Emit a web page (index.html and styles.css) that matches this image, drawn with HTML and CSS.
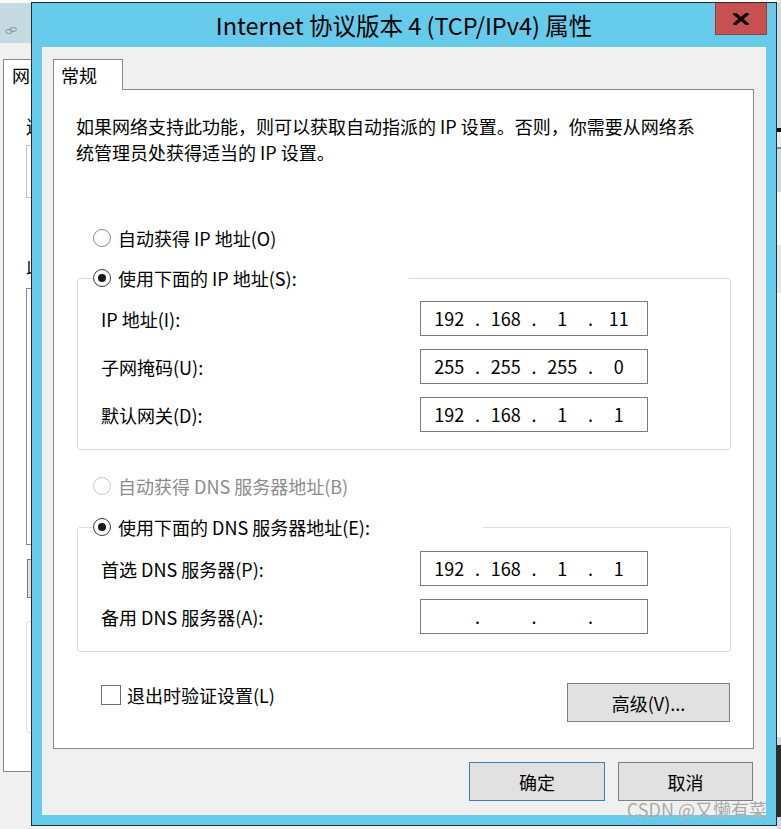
FILE: index.html
```html
<!DOCTYPE html>
<html lang="zh-CN">
<head>
  <meta charset="UTF-8" />
  <meta name="viewport" content="width=device-width, initial-scale=1.0"/>
  <title>Internet 协议版本 4 (TCP/IPv4) 属性</title>
  <link rel="stylesheet" href="styles.css">
</head>
<body>
  <div class="desktop">
    <!-- adapter properties window behind the dialog, only its left edge shows -->
    <div class="back-window">
      <div class="back-title">
        <svg class="back-icon" width="12" height="7" viewBox="0 0 12 7">
          <ellipse cx="4" cy="4.5" rx="3.5" ry="2" fill="none" stroke="#8a9298" stroke-width="1"/>
          <ellipse cx="8" cy="2.5" rx="3.5" ry="2" fill="none" stroke="#8a9298" stroke-width="1"/>
        </svg>
      </div>
      <div class="back-body">
        <div class="back-tab">网</div>
        <div class="back-panel">
          <p class="back-label">连</p>
          <div class="back-box"></div>
          <p class="back-label list-label">此</p>
          <div class="back-list"></div>
          <div class="back-btn"></div>
          <div class="back-group"></div>
        </div>
      </div>
    </div>

    <div class="right-strip"></div>

    <div class="dialog">
      <div class="titlebar">
        <span class="title">Internet 协议版本 4 (TCP/IPv4) 属性</span>
        <button class="close-btn" aria-label="关闭">
          <svg width="16" height="12" viewBox="0 0 16 12">
            <path d="M2 1 L14 11 M14 1 L2 11" stroke="#000" stroke-width="3.2" stroke-linecap="square"/>
          </svg>
        </button>
      </div>

      <div class="client">
        <div class="tab">常规</div>
        <div class="panel">
          <p class="intro">如果网络支持此功能，则可以获取自动指派的 IP 设置。否则，你需要从网络系<br>统管理员处获得适当的 IP 设置。</p>

          <label class="radio first-radio"><span class="radio-mark"></span>自动获得 IP 地址(O)</label>

          <fieldset class="group">
            <legend class="radio checked legend-ip"><span class="radio-mark"></span>使用下面的 IP 地址(S):</legend>
            <div class="field-row first-row">
              <span>IP 地址(I):</span>
              <div class="ip-field"><span>192</span><span>.</span><span>168</span><span>.</span><span>1</span><span>.</span><span>11</span></div>
            </div>
            <div class="field-row">
              <span>子网掩码(U):</span>
              <div class="ip-field"><span>255</span><span>.</span><span>255</span><span>.</span><span>255</span><span>.</span><span>0</span></div>
            </div>
            <div class="field-row">
              <span>默认网关(D):</span>
              <div class="ip-field"><span>192</span><span>.</span><span>168</span><span>.</span><span>1</span><span>.</span><span>1</span></div>
            </div>
          </fieldset>

          <label class="radio disabled auto-dns"><span class="radio-mark"></span>自动获得 DNS 服务器地址(B)</label>

          <fieldset class="group dns-group">
            <legend class="radio checked legend-dns"><span class="radio-mark"></span>使用下面的 DNS 服务器地址(E):</legend>
            <div class="field-row first-row">
              <span>首选 DNS 服务器(P):</span>
              <div class="ip-field"><span>192</span><span>.</span><span>168</span><span>.</span><span>1</span><span>.</span><span>1</span></div>
            </div>
            <div class="field-row">
              <span>备用 DNS 服务器(A):</span>
              <div class="ip-field"><span></span><span>.</span><span></span><span>.</span><span></span><span>.</span><span></span></div>
            </div>
          </fieldset>

          <div class="panel-bottom">
            <label class="checkbox"><span class="check-mark"></span>退出时验证设置(L)</label>
            <button class="btn advanced-btn">高级(V)...</button>
          </div>
        </div>

        <div class="dialog-buttons">
          <button class="btn ok-btn">确定</button>
          <button class="btn cancel-btn">取消</button>
        </div>
      </div>
    </div>

    <div class="watermark">CSDN @又懒有菜</div>
  </div>
</body>
</html>
```

FILE: styles.css
```css
* {
  box-sizing: border-box;
}

body {
  margin: 0;
  font-family: "Noto Sans CJK SC", sans-serif;
  font-size: 18px;
  color: #000;
  background: #f0f0f0;
}

.desktop {
  position: relative;
  width: 781px;
  height: 829px;
  overflow: hidden;
}

/* window in the background */
.back-window {
  width: 781px;
  height: 829px;
  background: #f0f0f0;
}

.back-title {
  height: 43px;
  border-top: 3px solid #fff;
  background: #c6dae1;
  padding: 24px 0 0 5px;
}

.back-icon {
  display: block;
}

.back-body {
  padding: 16px 0 0 3px;
}

.back-tab {
  position: relative;
  width: 70px;
  height: 31px;
  margin-bottom: -1px;
  padding-left: 8px;
  border: 1px solid #898989;
  border-bottom: none;
  background: #fff;
  line-height: 30px;
}

.back-panel {
  height: 683px;
  width: 740px;
  padding-left: 22px;
  border: 1px solid #898989;
  background: #fff;
}

.back-label {
  margin: 23px 0 0;
  line-height: 26px;
}

.back-label.list-label {
  margin-top: 54px;
}

.back-box {
  height: 53px;
  margin-top: 6px;
  border: 1px solid #c4c4c4;
}

.back-list {
  height: 257px;
  margin-top: 10px;
  border: 1px solid #828790;
}

.back-btn {
  width: 100px;
  height: 39px;
  margin: 14px 0 0 1px;
  border: 1px solid #7a7a7a;
  background: #e1e1e1;
}

.back-group {
  height: 112px;
  margin-top: 23px;
  border: 1px solid #dcdfe4;
  border-radius: 3px;
}

.right-strip {
  position: absolute;
  left: 777px;
  top: 0;
  width: 4px;
  height: 829px;
  background: linear-gradient(to bottom,
    #e8e8e8 0, #e8e8e8 3px,
    #c9dde3 3px, #c9dde3 128px,
    #111 128px, #111 132px,
    #e9eef0 132px, #e9eef0 147px,
    #888 147px, #888 149px,
    #c9dde3 149px, #c9dde3 192px,
    #fff 192px, #fff 245px,
    #e6eaec 245px, #e6eaec 293px,
    #fff 293px, #fff 737px,
    #c9dde3 737px, #c9dde3 745px,
    #2b2b2b 745px, #2b2b2b 817px,
    #c9dde3 817px);
}

/* the dialog */
.dialog {
  position: absolute;
  left: 31px;
  top: 2px;
  width: 746px;
  height: 824px;
  border: 1px solid #2b2b2b;
  background: #66cbea;
}

.titlebar {
  position: relative;
  height: 44px;
  text-align: center;
  font-size: 23.5px;
  line-height: 44px;
}

.close-btn {
  position: absolute;
  top: 0;
  right: 9px;
  width: 52px;
  height: 32px;
  padding: 0;
  border: 1px solid #9b3c3a;
  border-top: none;
  background: #c75050;
  display: flex;
  align-items: center;
  justify-content: center;
}

.client {
  height: 768px;
  margin: 0 10px;
  padding: 12px 12px 0 11px;
  background: #f0f0f0;
}

.tab {
  position: relative;
  width: 70px;
  height: 31px;
  margin-bottom: -1px;
  padding-left: 7px;
  border: 1px solid #898989;
  border-bottom: none;
  background: #fff;
  line-height: 30px;
}

.panel {
  height: 660px;
  padding: 23px 22px 0;
  border: 1px solid #898989;
  background: #fff;
}

.intro {
  margin: 0;
  line-height: 26px;
}

.radio {
  display: flex;
  align-items: center;
  gap: 7px;
  height: 26px;
  line-height: 26px;
  white-space: nowrap;
}

.first-radio {
  margin: 60px 0 0 17px;
}

.auto-dns {
  margin: 23px 0 0 17px;
}

.radio-mark {
  display: flex;
  align-items: center;
  justify-content: center;
  width: 18px;
  height: 18px;
  border: 1px solid #8a8a8a;
  border-radius: 50%;
  background: #fff;
}

.radio.checked .radio-mark {
  border-color: #3c3c3c;
}

.radio.checked .radio-mark::after {
  content: "";
  width: 8px;
  height: 8px;
  border-radius: 50%;
  background: #1a1a1a;
}

.radio.disabled {
  color: #8c8c8c;
}

.radio.disabled .radio-mark {
  border-color: #c8c8c8;
}

.group {
  margin: 14px 0 0 1px;
  padding: 0 0 17px;
  border: 1px solid #d5dfe5;
  border-radius: 3px;
  min-width: 0;
}

.group.dns-group {
  margin-top: 15px;
}

.group legend {
  margin-left: 15px;
  padding: 0;
}

.legend-ip {
  width: 315px;
}

.legend-dns {
  width: 390px;
}

.field-row {
  display: flex;
  align-items: center;
  justify-content: space-between;
  margin-top: 13px;
  padding: 0 82px 0 23px;
}

.field-row.first-row {
  margin-top: 10px;
}

.dns-group .field-row.first-row {
  margin-top: 11px;
}

.ip-field {
  display: grid;
  grid-template-columns: 1fr 8px 1fr 8px 1fr 8px 1fr;
  align-items: center;
  width: 228px;
  height: 35px;
  padding: 0 4px;
  border: 1px solid #7a7a7a;
  background: #fff;
  text-align: center;
  line-height: 33px;
}

.panel-bottom {
  display: flex;
  justify-content: space-between;
  align-items: flex-start;
  margin-top: 31px;
  padding: 0 1px 0 25px;
}

.checkbox {
  display: flex;
  align-items: center;
  gap: 6px;
  margin-top: 1px;
  line-height: 22px;
}

.check-mark {
  width: 20px;
  height: 20px;
  border: 1px solid #6e6e6e;
  background: #fff;
}

.btn {
  height: 39px;
  padding: 0;
  border: 1px solid #7f7f7f;
  background: #e1e1e1;
  font-family: inherit;
  font-size: 18px;
  color: #000;
}

.advanced-btn {
  width: 163px;
}

.dialog-buttons {
  display: flex;
  justify-content: flex-end;
  gap: 13px;
  margin-top: 13px;
  padding-right: 1px;
}

.ok-btn {
  width: 136px;
  border-color: #3c7fb1;
}

.cancel-btn {
  width: 135px;
}

.watermark {
  position: absolute;
  right: 14px;
  bottom: 9px;
  font-size: 18px;
  line-height: 22px;
  color: rgba(140, 140, 140, 0.75);
  text-shadow: 0 0 1px rgba(255, 255, 255, 0.8);
}
```
